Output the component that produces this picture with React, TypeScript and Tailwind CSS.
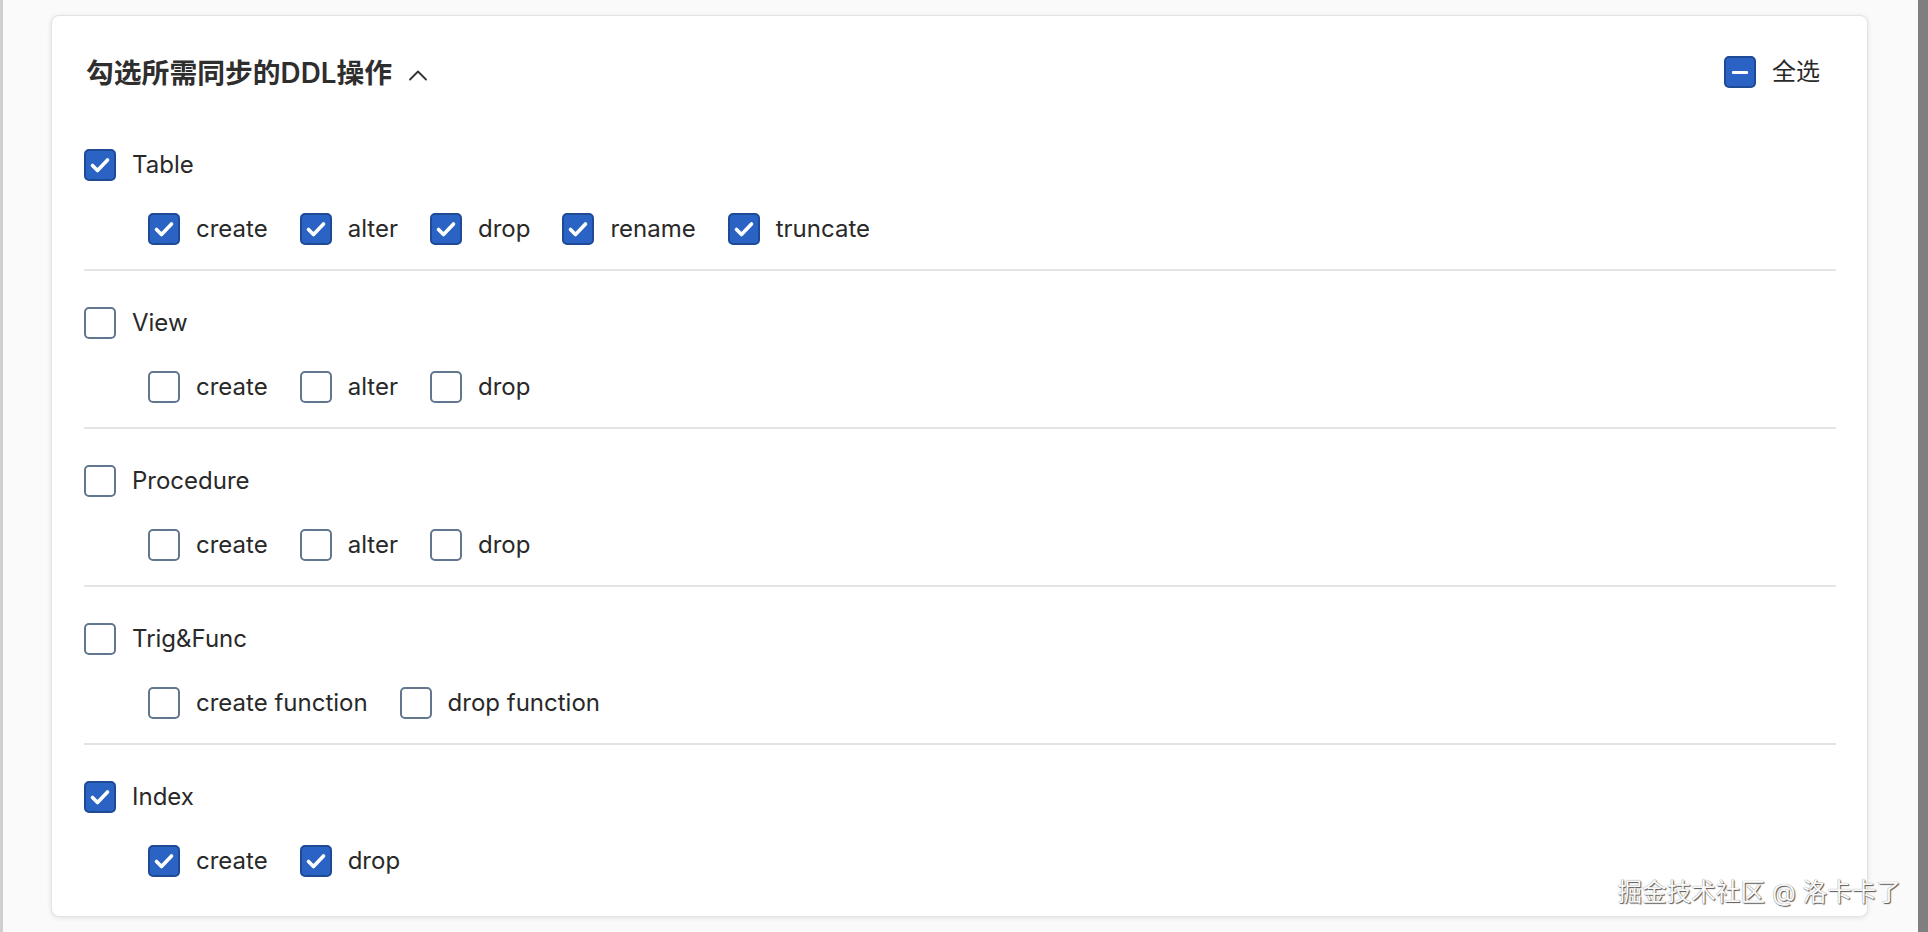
import React from "react";

type Item = { label: string; checked: boolean };
type Section = { title: string; checked: boolean; items: Item[] };

const sections: Section[] = [
  {
    title: "Table",
    checked: true,
    items: [
      { label: "create", checked: true },
      { label: "alter", checked: true },
      { label: "drop", checked: true },
      { label: "rename", checked: true },
      { label: "truncate", checked: true },
    ],
  },
  {
    title: "View",
    checked: false,
    items: [
      { label: "create", checked: false },
      { label: "alter", checked: false },
      { label: "drop", checked: false },
    ],
  },
  {
    title: "Procedure",
    checked: false,
    items: [
      { label: "create", checked: false },
      { label: "alter", checked: false },
      { label: "drop", checked: false },
    ],
  },
  {
    title: "Trig&Func",
    checked: false,
    items: [
      { label: "create function", checked: false },
      { label: "drop function", checked: false },
    ],
  },
  {
    title: "Index",
    checked: true,
    items: [
      { label: "create", checked: true },
      { label: "drop", checked: true },
    ],
  },
];

function Box({ state }: { state: "checked" | "unchecked" | "indeterminate" }) {
  if (state === "unchecked") {
    return (
      <span className="block w-[32px] h-[32px] shrink-0 rounded-[5px] border-2 border-[#62778f] bg-white" />
    );
  }
  return (
    <span className="flex items-center justify-center w-[32px] h-[32px] shrink-0 rounded-[5px] border-2 border-[#1f4b96] bg-[#2a63c4]">
      {state === "checked" ? (
        <svg width="28" height="28" viewBox="0 0 28 28" fill="none">
          <path
            d="M6.5 14.5 L11.5 19.5 L21.5 9"
            stroke="white"
            strokeWidth="3.6"
            strokeLinecap="round"
            strokeLinejoin="round"
          />
        </svg>
      ) : (
        <span className="block w-[16px] h-[3px] bg-white rounded-[1px]" />
      )}
    </span>
  );
}

function Check({ label, checked }: { label: string; checked: boolean }) {
  return (
    <div className="flex items-center gap-[16px] h-[32px]">
      <Box state={checked ? "checked" : "unchecked"} />
      <span className="text-[24px] leading-none text-[#292929] whitespace-nowrap">{label}</span>
    </div>
  );
}

export default function App() {
  return (
    <div
      className="relative flex w-full h-[932px] bg-[#fafafa] overflow-hidden"
      style={{ fontFamily: 'Inter, "Noto Sans CJK SC", "Noto Sans", sans-serif' }}
    >
      <div className="w-[3px] bg-[#cfcfcf] shrink-0" />
      <div className="flex-1 pl-[48px] pr-[50px] pt-[15px] pb-[15px]">
        <div className="h-full rounded-[8px] border border-[#e3e3e3] bg-white shadow-[0_1px_5px_rgba(0,0,0,0.10)] pl-[32px] pr-[31px] pt-[38px] pb-[14px]">
          <div className="flex items-center justify-between h-[40px] pr-[16px]">
            <div className="flex items-center gap-[16px]">
              <span className="text-[27.8px] leading-none font-semibold text-[#2e2e2e] pl-[2px]">
                勾选所需同步的DDL操作
              </span>
              <svg width="20" height="12" viewBox="0 0 20 12" fill="none" className="mt-[2px]">
                <path
                  d="M2 10.5 L10 2.5 L18 10.5"
                  stroke="#333"
                  strokeWidth="1.8"
                  strokeLinecap="round"
                  strokeLinejoin="round"
                />
              </svg>
            </div>
            <div className="flex items-center gap-[16px] -mt-[4px]">
              <Box state="indeterminate" />
              <span className="text-[24px] leading-none text-[#292929]">全选</span>
            </div>
          </div>
          <div className="flex flex-col">
            {sections.map((s, i) => (
              <div
                key={s.title}
                className={
                  i === 0
                    ? "flex flex-col gap-[32px] pt-[55px] pb-[24px]"
                    : "flex flex-col gap-[32px] pt-[36px] pb-[24px] border-t-2 border-[#e4e4e4]"
                }
              >
                <Check label={s.title} checked={s.checked} />
                <div className="flex items-center gap-[32px] pl-[64px]">
                  {s.items.map((it) => (
                    <Check key={it.label} label={it.label} checked={it.checked} />
                  ))}
                </div>
              </div>
            ))}
          </div>
        </div>
      </div>
      <div className="w-[10px] bg-[#7f7f7f] shrink-0" />
      <div className="absolute right-[27px] bottom-[27px] text-[24.6px] leading-none text-[#fafafa] [text-shadow:1px_1px_1px_#555,0_0_1px_#777]">
        掘金技术社区 @ 洛卡卡了
      </div>
    </div>
  );
}
